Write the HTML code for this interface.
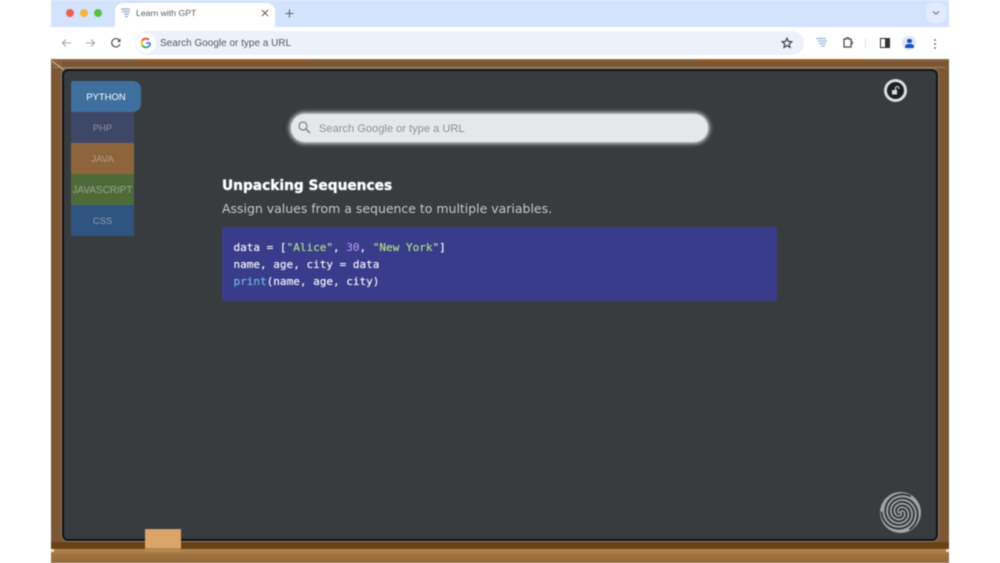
<!DOCTYPE html>
<html><head><meta charset="utf-8"><title>Learn with GPT</title>
<style>
html,body{margin:0;padding:0;background:#fff;width:1000px;height:563px;overflow:hidden;font-family:"Liberation Sans",sans-serif}
.a{position:absolute}
#root{position:absolute;left:0;top:0;width:1000px;height:563px;overflow:hidden;filter:blur(.6px)}
.t{position:absolute;white-space:nowrap}
.tab{position:absolute;left:71px;width:63px;height:31px;text-align:center;line-height:33px;font-size:9.5px;color:#9aa0a8}
.mono{font-family:"DejaVu Sans Mono","Liberation Mono",monospace;font-size:11.03px;line-height:17px;color:#f0f0f8;white-space:pre}
</style></head><body>
<div id="root">
<!-- chrome -->
<div class="a" style="left:51px;top:0;width:898px;height:27px;background:#d3e3fd"></div>
<div class="a" style="left:51px;top:27px;width:898px;height:32px;background:#fff"></div>
<div class="a" style="left:65.5px;top:9px;width:8px;height:8px;border-radius:50%;background:#ee5f58"></div>
<div class="a" style="left:79.5px;top:9px;width:8px;height:8px;border-radius:50%;background:#f5b83e"></div>
<div class="a" style="left:93.5px;top:9px;width:8px;height:8px;border-radius:50%;background:#5cc046"></div>
<div class="a" style="left:115px;top:3px;width:160px;height:24px;background:#fff;border-radius:8px 8px 0 0"></div>
<svg class="a" style="left:120px;top:7px" width="12" height="12" viewBox="0 0 12 12"><path d="M1 2h9M2 4.500h8M4 7h5M5 9.500h3" stroke="#9db8d8" stroke-width="1.500" fill="none"/></svg>
<div class="t" style="left:136px;top:7px;font-size:8.700px;line-height:12px;color:#5a5f66">Learn with GPT</div>
<svg class="a" style="left:260px;top:8px" width="10" height="10"><path d="M2 2l6 6M8 2l-6 6" stroke="#666" stroke-width="1.100"/></svg>
<svg class="a" style="left:284px;top:8px" width="11" height="11"><path d="M5.500 1.500v8M1.500 5.500h8" stroke="#666" stroke-width="1.100"/></svg>
<div class="a" style="left:926px;top:3px;width:20px;height:20px;border-radius:7px;background:#e2ebfb"></div>
<svg class="a" style="left:931px;top:10px" width="10" height="6"><path d="M2 1.500l3 2.500 3-2.500" stroke="#666" stroke-width="1" fill="none"/></svg>
<!-- toolbar icons -->
<svg class="a" style="left:60px;top:37px" width="13" height="12"><path d="M11 6H2.500M6 2.500L2.500 6 6 9.500" stroke="#a0a4a8" stroke-width="1.100" fill="none"/></svg>
<svg class="a" style="left:84px;top:37px" width="13" height="12"><path d="M2 6h8.500M7 2.500L10.500 6 7 9.500" stroke="#a0a4a8" stroke-width="1.100" fill="none"/></svg>
<svg class="a" style="left:110px;top:37px" width="12" height="12"><path d="M9.800 4A4.200 4.200 0 1 0 10 7" stroke="#505458" stroke-width="1.200" fill="none"/><path d="M10.500 1.500v3.500H7z" fill="#505458"/></svg>
<div class="a" style="left:135px;top:31px;width:669px;height:24px;border-radius:12px;background:#edf1f9"></div>
<div class="a" style="left:136px;top:33px;width:20px;height:20px;border-radius:50%;background:#fff"></div>
<svg class="a" style="left:140px;top:37px" width="12" height="12" viewBox="0 0 12 12">
<path d="M10.500 6H6.200" stroke="#4285f4" stroke-width="1.800" fill="none"/>
<path d="M10.300 6.500A4.400 4.400 0 0 1 8.800 9.400" stroke="#4285f4" stroke-width="1.800" fill="none"/>
<path d="M8.800 9.400A4.400 4.400 0 0 1 2.200 8.200" stroke="#34a853" stroke-width="1.800" fill="none"/>
<path d="M2.200 8.200A4.400 4.400 0 0 1 2.200 3.800" stroke="#fbbc05" stroke-width="1.800" fill="none"/>
<path d="M2.200 3.800A4.400 4.400 0 0 1 9 2.800" stroke="#ea4335" stroke-width="1.800" fill="none"/></svg>
<div class="t" style="left:160px;top:38px;font-size:10px;line-height:12px;color:#55595e">Search Google or type a URL</div>
<svg class="a" style="left:781px;top:37px" width="12" height="12" viewBox="0 0 12 12"><path d="M6 1.200l1.400 3.200 3.500.3-2.700 2.300.8 3.400L6 8.600l-3 1.800.8-3.400L1.100 4.700l3.500-.3z" stroke="#444" stroke-width="1.200" fill="none"/></svg>
<svg class="a" style="left:815px;top:36px" width="13" height="13" viewBox="0 0 13 13"><path d="M1 2.500h10M3 5h9M4 7.500h7M6 10h4" stroke="#a9c2e0" stroke-width="1.600" fill="none"/></svg>
<svg class="a" style="left:841px;top:36px" width="13" height="13" viewBox="0 0 13 13"><path d="M3 3h2.500V1.800h2V3H10v2.800h1.200v2H10V11H3z" stroke="#444" stroke-width="1.200" fill="none"/></svg>
<div class="a" style="left:865px;top:38px;width:1px;height:10px;background:#dde3ec"></div>
<div class="a" style="left:880px;top:38px;width:8px;height:8px;border:1px solid #333;background:linear-gradient(90deg,#fff 50%,#333 50%)"></div>
<div class="a" style="left:902px;top:36px;width:14px;height:14px;border-radius:50%;background:#dbe6fb"></div>
<div class="a" style="left:907px;top:38.500px;width:4.500px;height:4.500px;border-radius:50%;background:#1a50b8"></div>
<div class="a" style="left:905px;top:44px;width:9px;height:3.500px;border-radius:3px 3px 1px 1px;background:#1a50b8"></div>
<div class="a" style="left:934px;top:38.500px;width:2px;height:2px;border-radius:50%;background:#777;box-shadow:0 4px 0 #777,0 8px 0 #777"></div>
<!-- frame -->
<div class="a" style="left:51px;top:59px;width:898px;height:504px;background:#7b5733"></div>
<div class="a" style="left:51px;top:59px;width:898px;height:2px;background:#8f673c"></div>
<div class="a" style="left:136px;top:59px;width:172px;height:2px;background:#a85e20"></div>
<div class="a" style="left:697px;top:59px;width:170px;height:2px;background:#a85e20"></div>
<div class="a" style="left:53px;top:67px;width:892px;height:1px;background:#9c8266"></div>
<div class="a" style="left:51px;top:61px;width:11px;height:5px;background:#866038"></div>
<svg class="a" style="left:51px;top:60px" width="14" height="12"><path d="M1 1l12 9" stroke="#c4ad92" stroke-width="1.200"/></svg>
<!-- board -->
<div class="a" style="left:61px;top:68px;width:878px;height:474px;border:1px solid #8f7a63;border-radius:7px;box-sizing:border-box"></div>
<div class="a" style="left:62px;top:69px;width:876px;height:472px;box-sizing:border-box;background:#383c3f;border:2px solid #131416;border-radius:6px"></div>
<!-- ledge -->
<div class="a" style="left:51px;top:542px;width:898px;height:7px;background:#6a4216"></div>
<div class="a" style="left:51px;top:549px;width:898px;height:14px;background:linear-gradient(#b28655,#a2743f 40%,#94693a)"></div>
<div class="a" style="left:51px;top:549px;width:3px;height:3px;background:#e8dccb"></div>
<div class="a" style="left:946px;top:549px;width:3px;height:3px;background:#e8dccb"></div>
<div class="a" style="left:145px;top:529px;width:36px;height:19px;background:#dba468;box-shadow:inset 0 1px 0 #c0a083"></div>
<div class="a" style="left:145px;top:548px;width:36px;height:4px;background:#b4884f"></div>
<!-- tabs -->
<div class="a" style="left:71px;top:81px;width:70px;height:31px;background:#3e6f9f;border-radius:2px 8px 8px 2px;text-align:center;line-height:33px;font-size:9.500px;color:#fff">PYTHON</div>
<div class="tab" style="top:112px;background:#3f4768;color:#8a8f9f">PHP</div>
<div class="tab" style="top:143px;background:#8e643c;color:#b09e8e">JAVA</div>
<div class="tab" style="top:174px;background:#4e6a39;color:#98a58e;font-size:10px">JAVASCRIPT</div>
<div class="tab" style="top:205px;height:31px;background:#2f5480;color:#8d9fb4">CSS</div>
<!-- search -->
<div class="a" style="left:291px;top:114px;width:417px;height:28px;border-radius:14px;background:#e6e7e8;box-shadow:0 0 4px 1.500px rgba(255,255,255,.85)"></div>
<svg class="a" style="left:297px;top:120px" width="15" height="15" viewBox="0 0 15 15"><circle cx="6" cy="6" r="4" stroke="#808080" stroke-width="1.200" fill="none"/><path d="M9 9l4 4" stroke="#808080" stroke-width="1.400"/></svg>
<div class="t" style="left:319px;top:121.500px;font-size:11.100px;line-height:14px;color:#909295">Search Google or type a URL</div>
<!-- content -->
<div class="t" style="left:222px;top:176.500px;font-family:'DejaVu Sans',sans-serif;font-size:13.750px;line-height:18px;font-weight:700;color:#fff;text-shadow:0 0 1px #fff">Unpacking Sequences</div>
<div class="t" style="left:222px;top:201px;font-family:'DejaVu Sans',sans-serif;font-size:12.470px;line-height:16px;color:#c6c8ca">Assign values from a sequence to multiple variables.</div>
<div class="a" style="left:222px;top:227px;width:555px;height:74px;background:#393c8a;border-radius:2px"></div>
<div class="a mono" style="left:233.500px;top:238.500px;text-shadow:0 0 .5px currentColor">data = [<span style="color:#a9d98a">"Alice"</span>, <span style="color:#a98ce8">30</span>, <span style="color:#a9d98a">"New York"</span>]
name, age, city = data
<span style="color:#6cb4e4">print</span>(name, age, city)</div>
<!-- lock -->
<div class="a" style="left:884px;top:79px;width:23px;height:23px;box-sizing:border-box;border:3px solid #dcdcdc;border-radius:50%;background:#1f2022"></div>
<svg class="a" style="left:889px;top:84px" width="13" height="13" viewBox="0 0 13 13"><rect x="3" y="6" width="5" height="4.500" fill="#dcdcdc"/><path d="M6.500 6V4.200a1.700 1.700 0 0 1 3.400 0V5" stroke="#dcdcdc" stroke-width="1.100" fill="none"/></svg>
<!-- spiral -->
<svg class="a" style="left:879px;top:491px" width="43" height="43" viewBox="-21.500 -21.500 43 43">
<defs><path id="arm" d="M2 0A2.500 2.500 0 0 1 1.950 3.380A4.500 4.500 0 0 1-2.900 5.020A6.500 6.500 0 0 1-7.700 0A8.800 8.800 0 0 1-4.800-8.310A10.500 10.500 0 0 1 5.700-9.870A12.500 12.500 0 0 1 13.300 0A14.500 14.500 0 0 1 7.600 13.160A16.500 16.500 0 0 1-8.550 14.800A18 18 0 0 1-19 0" fill="none" stroke="#33373a" stroke-width="1.900" stroke-linecap="round"/></defs>
<circle r="20.500" fill="#a2a4a7"/>
<use href="#arm"/><use href="#arm" transform="rotate(120)"/><use href="#arm" transform="rotate(240)"/>
</svg>
</div>
</body></html>
